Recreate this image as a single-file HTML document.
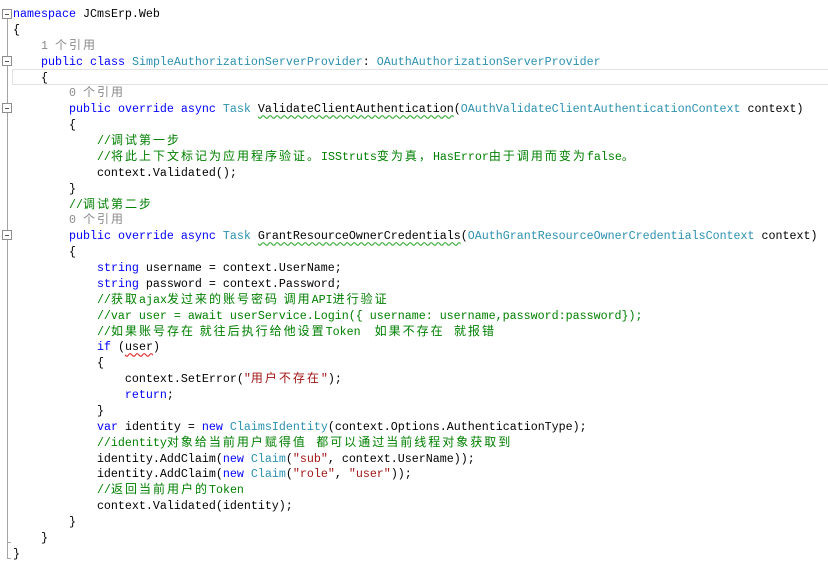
<!DOCTYPE html>
<html><head><meta charset="utf-8"><style>
html,body{margin:0;padding:0;background:#fff;width:828px;height:566px;overflow:hidden;position:relative}
.code{position:absolute;left:13px;top:7px;font-family:"Liberation Mono","Noto Sans CJK SC",monospace;font-size:11.67px;color:#000}
.l{height:15.88px;line-height:15.88px;white-space:pre;overflow:visible}
.c{font-family:"Noto Sans CJK SC","WenQuanYi Zen Hei",sans-serif;font-size:12px;letter-spacing:2px;line-height:0}
.k{color:#0000ff}.t{color:#2b91af}.g{color:#008000}.s{color:#a31515}.r{color:#8a8a8a}
.w{text-decoration:underline wavy #3fae3f;text-underline-offset:2px}
.wr{text-decoration:underline wavy #e03030;text-underline-offset:2px}
.vl{position:absolute;left:7px;width:1px;background:#a5a5a5}
.box{position:absolute;left:2px;width:8px;height:8px;border:1px solid #8d8d8d;background:#fff}
.box:after{content:"";position:absolute;left:2px;top:3.5px;width:4px;height:1px;background:#555}
.tick{position:absolute;left:7px;width:4px;height:1px;background:#a5a5a5}
.cur{position:absolute;left:12px;top:69px;width:820px;height:14px;border:1px solid #e2e2e2;border-right:none}
</style></head><body>
<div class="vl" style="top:19px;height:540px"></div>
<div class="box" style="top:9px"></div>
<div class="box" style="top:56px"></div>
<div class="box" style="top:103px"></div>
<div class="box" style="top:230px"></div>
<div class="tick" style="top:542px"></div>
<div class="tick" style="top:558px"></div>
<div class="cur"></div>
<div class="code">
<div class="l"><span class="k">namespace</span> JCmsErp.Web</div>
<div class="l">{</div>
<div class="l r">    1 <span class="c">个引用</span></div>
<div class="l">    <span class="k">public</span> <span class="k">class</span> <span class="t">SimpleAuthorizationServerProvider</span>: <span class="t">OAuthAuthorizationServerProvider</span></div>
<div class="l">    {</div>
<div class="l r">        0 <span class="c">个引用</span></div>
<div class="l">        <span class="k">public</span> <span class="k">override</span> <span class="k">async</span> <span class="t">Task</span> <span class="w">ValidateClientAuthentication</span>(<span class="t">OAuthValidateClientAuthenticationContext</span> context)</div>
<div class="l">        {</div>
<div class="l g">            //<span class="c">调试第一步</span></div>
<div class="l g">            //<span class="c">将此上下文标记为应用程序验证。</span>ISStruts<span class="c">变为真，</span>HasError<span class="c">由于调用而变为</span>false<span class="c">。</span></div>
<div class="l">            context.Validated();</div>
<div class="l">        }</div>
<div class="l g">        //<span class="c">调试第二步</span></div>
<div class="l r">        0 <span class="c">个引用</span></div>
<div class="l">        <span class="k">public</span> <span class="k">override</span> <span class="k">async</span> <span class="t">Task</span> <span class="w">GrantResourceOwnerCredentials</span>(<span class="t">OAuthGrantResourceOwnerCredentialsContext</span> context)</div>
<div class="l">        {</div>
<div class="l">            <span class="k">string</span> username = context.UserName;</div>
<div class="l">            <span class="k">string</span> password = context.Password;</div>
<div class="l g">            //<span class="c">获取</span>ajax<span class="c">发过来的账号密码 调用</span>API<span class="c">进行验证</span></div>
<div class="l g">            //var user = await userService.Login({ username: username,password:password});</div>
<div class="l g">            //<span class="c">如果账号存在 就往后执行给他设置</span>Token  <span class="c">如果不存在  就报错</span></div>
<div class="l">            <span class="k">if</span> (<span class="wr">user</span>)</div>
<div class="l">            {</div>
<div class="l">                context.SetError(<span class="s">"<span class="c">用户不存在</span>"</span>);</div>
<div class="l">                <span class="k">return</span>;</div>
<div class="l">            }</div>
<div class="l">            <span class="k">var</span> identity = <span class="k">new</span> <span class="t">ClaimsIdentity</span>(context.Options.AuthenticationType);</div>
<div class="l g">            //identity<span class="c">对象给当前用户赋得值  都可以通过当前线程对象获取到</span></div>
<div class="l">            identity.AddClaim(<span class="k">new</span> <span class="t">Claim</span>(<span class="s">"sub"</span>, context.UserName));</div>
<div class="l">            identity.AddClaim(<span class="k">new</span> <span class="t">Claim</span>(<span class="s">"role"</span>, <span class="s">"user"</span>));</div>
<div class="l g">            //<span class="c">返回当前用户的</span>Token</div>
<div class="l">            context.Validated(identity);</div>
<div class="l">        }</div>
<div class="l">    }</div>
<div class="l">}</div>
</div>
</body></html>
